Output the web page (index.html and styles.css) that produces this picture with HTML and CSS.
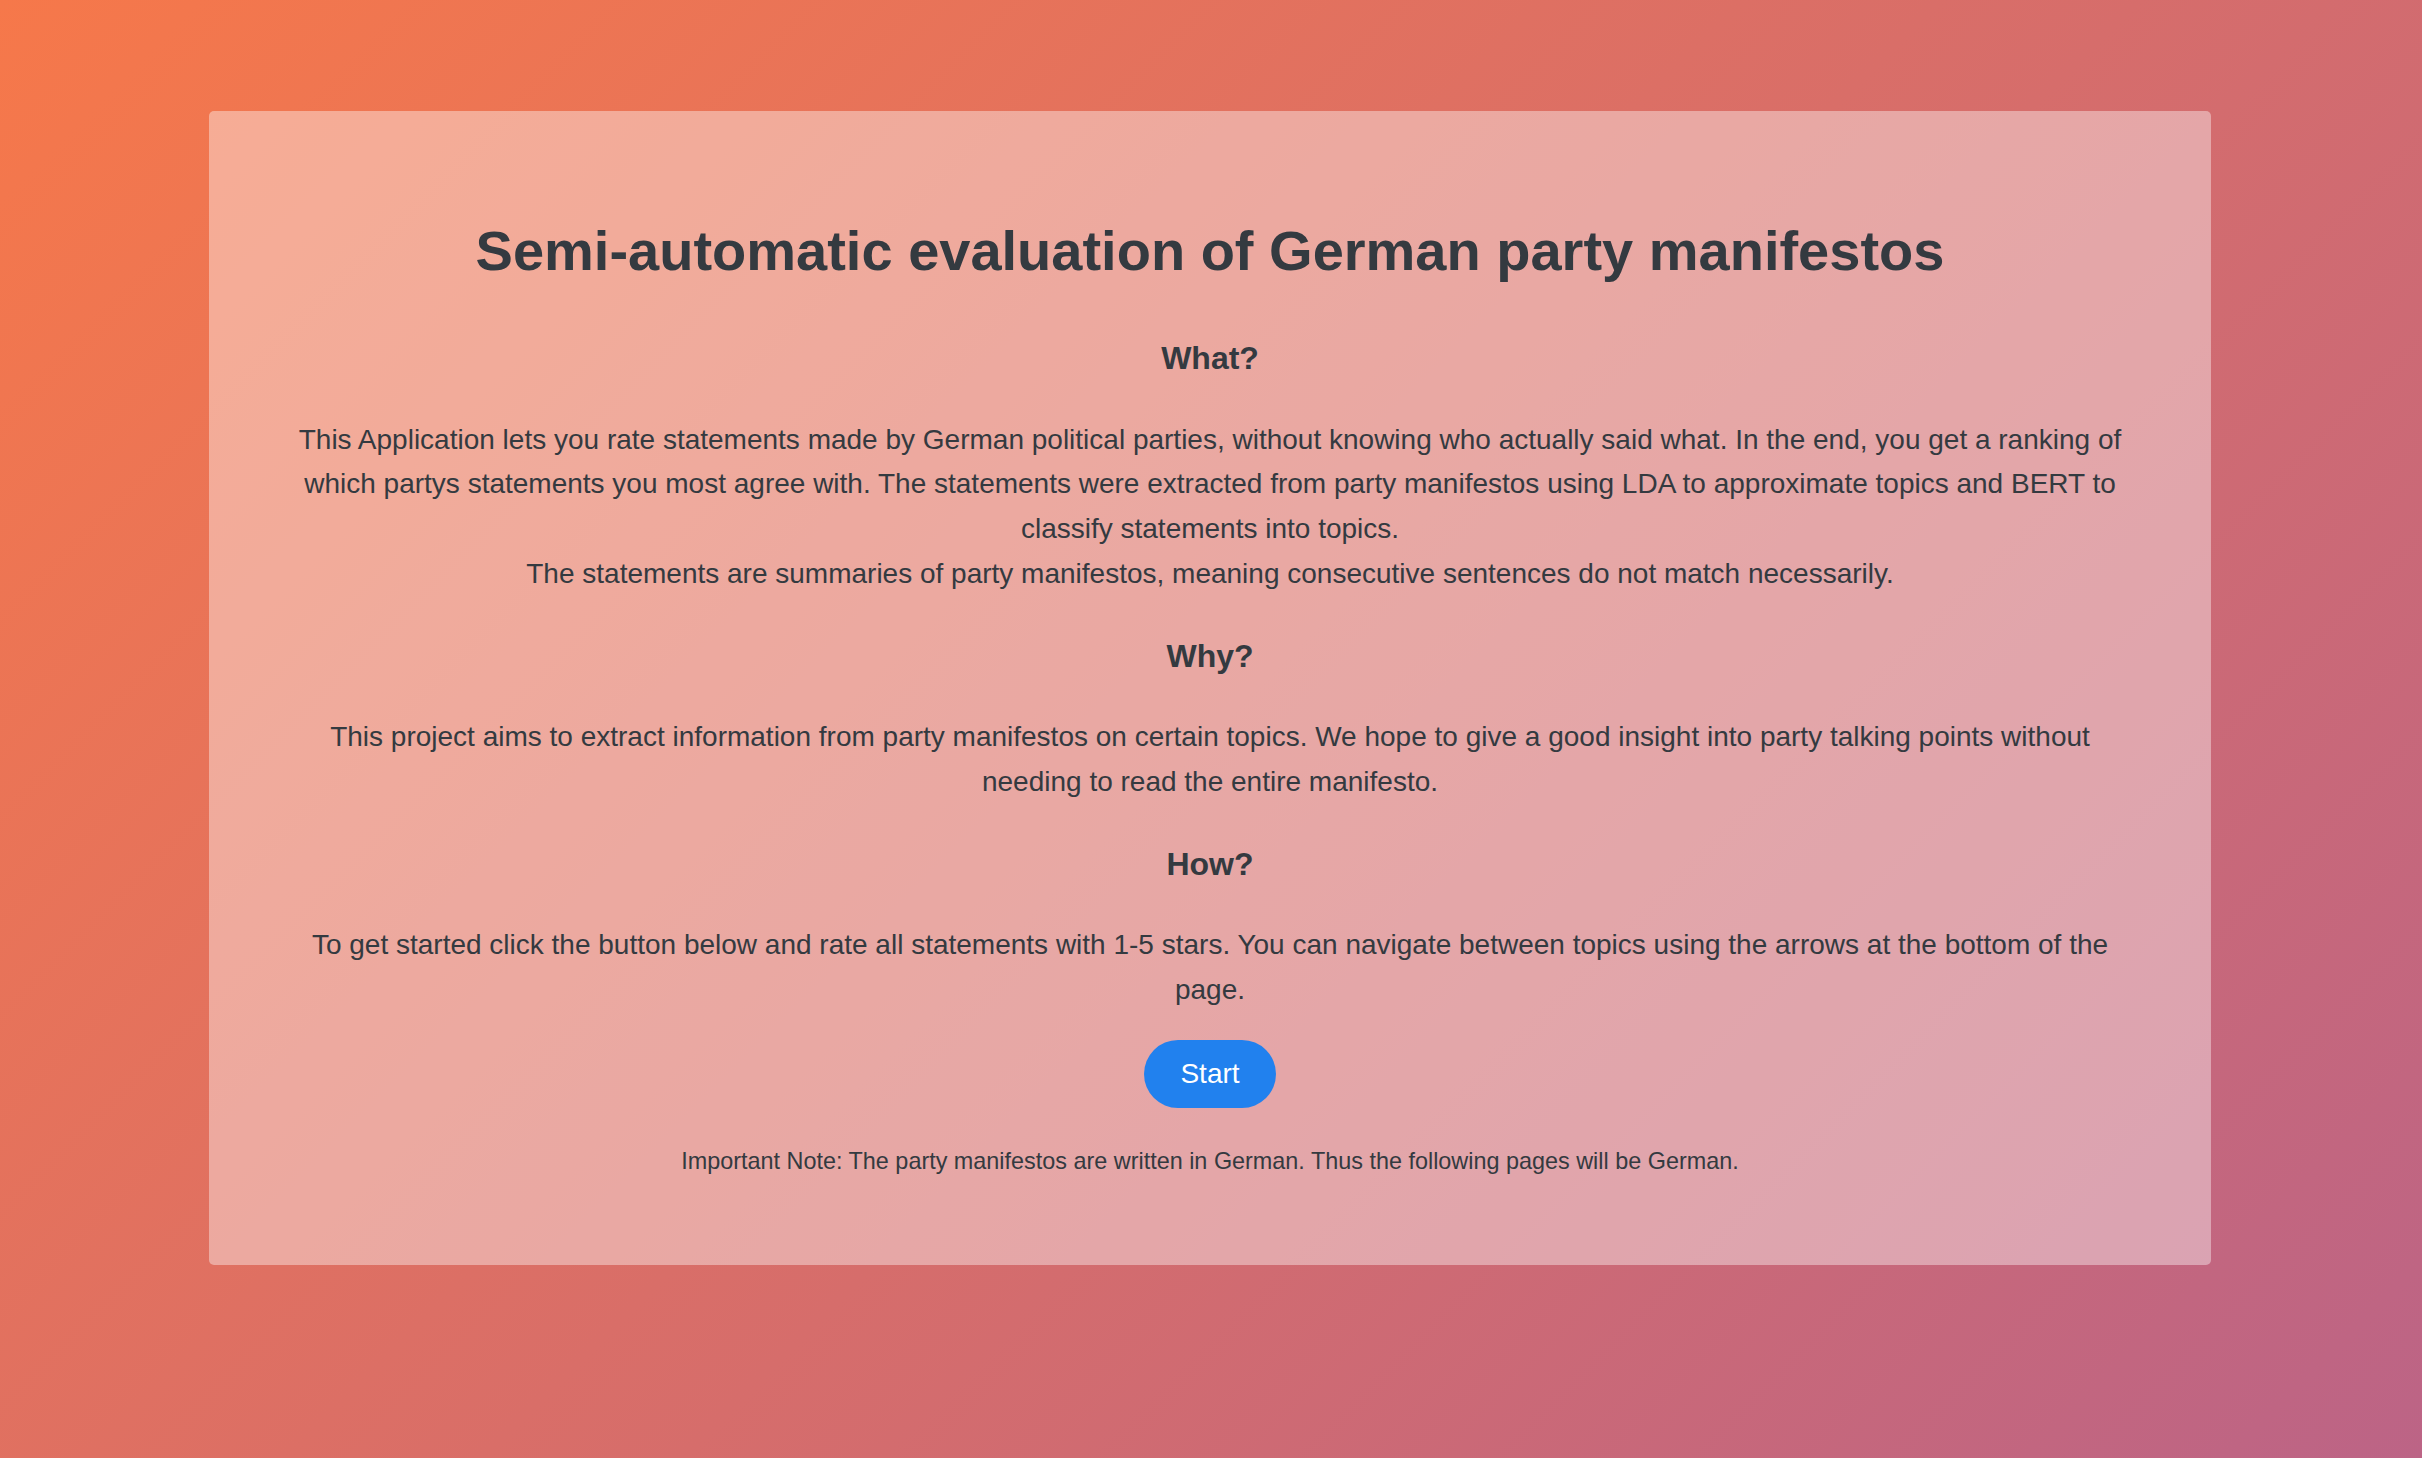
FILE: index.html
```html
<!DOCTYPE html>
<html lang="en">
<head>
    <meta charset="UTF-8">
    <title>Semi-automatic evaluation of German party manifestos</title>
    <link rel="stylesheet" href="styles.css">
</head>
<body>
    <div class="card">
        <h1>Semi-automatic evaluation of German party manifestos</h1>

        <h3>What?</h3>
        <p>This Application lets you rate statements made by German political parties, without knowing who actually said what. In the end, you get a ranking of which partys statements you most agree with. The statements were extracted from party manifestos using LDA to approximate topics and BERT to classify statements into topics.<br>The statements are summaries of party manifestos, meaning consecutive sentences do not match necessarily.</p>

        <h3>Why?</h3>
        <p>This project aims to extract information from party manifestos on certain topics. We hope to give a good insight into party talking points without needing to read the entire manifesto.</p>

        <h3>How?</h3>
        <p class="last">To get started click the button below and rate all statements with 1-5 stars. You can navigate between topics using the arrows at the bottom of the page.</p>

        <div class="actions">
            <button class="btn-start">Start</button>
        </div>
        <div class="note">Important Note: The party manifestos are written in German. Thus the following pages will be German.</div>
    </div>
</body>
</html>
```
FILE: styles.css
```css
html, body { margin: 0; }
body {
    min-height: 100vh;
    background: linear-gradient(135deg, #f6784a 0%, #bc6486 100%);
    color: #343a40;
    font-family: 'Liberation Sans', Arial, sans-serif;
}
.card {
    box-sizing: border-box;
    width: 2002px;
    margin: 111px 211px 0 209px;
    padding: 106px 80px 86px;
    border-radius: 5px;
    background: rgba(255, 255, 255, 0.4);
    text-align: center;
}
h1 {
    font-size: 56px;
    line-height: 1.2;
    font-weight: bold;
    margin: 0 0 55px;
}
h3 {
    font-size: 32px;
    line-height: 1.2;
    font-weight: bold;
    margin: 0 0 40px;
}
p {
    font-size: 28px;
    line-height: 1.6;
    margin: 0 0 40px;
}
p.last { margin-bottom: 27px; }
.actions {
    display: flex;
    justify-content: center;
}
.btn-start {
    font-family: inherit;
    font-size: 28px;
    line-height: 42px;
    padding: 13px 36px;
    border: none;
    border-radius: 34px;
    background: #2181ee;
    color: #fff;
    cursor: pointer;
}
.note {
    margin-top: 36px;
    font-size: 23.4px;
    line-height: 1.5;
}
```
